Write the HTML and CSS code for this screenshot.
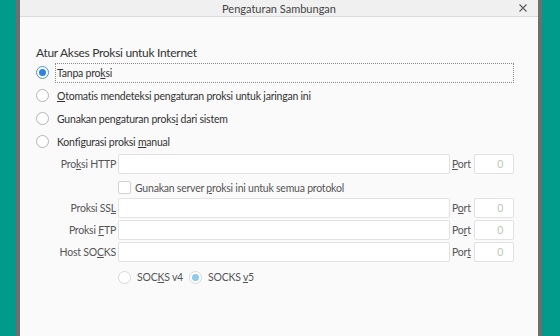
FILE: index.html
```html
<!DOCTYPE html>
<html>
<head>
    <meta charset="utf-8">
    <link rel="stylesheet" href="styles.css">
</head>
<body>
<div class="desk">
    <div class="dialog">
        <div class="titlebar">
            <span class="title">Pengaturan Sambungan</span>
            <svg class="close" width="8" height="8" viewBox="0 0 8 8">
                <path d="M0.5 0.5 L7.5 7.5 M7.5 0.5 L0.5 7.5" stroke="#5a5a5a" stroke-width="1.1" fill="none"/>
            </svg>
        </div>
        <div class="content">
            <h1 class="heading">Atur Akses Proksi untuk Internet</h1>

            <div class="option">
                <span class="radio checked"></span>
                <span class="option_label focused">Tanpa pro<u>k</u>si</span>
            </div>
            <div class="option">
                <span class="radio"></span>
                <span class="option_label"><u>O</u>tomatis mendeteksi pengaturan proksi untuk jaringan ini</span>
            </div>
            <div class="option">
                <span class="radio"></span>
                <span class="option_label">Gunakan pengaturan proks<u>i</u> dari sistem</span>
            </div>
            <div class="option">
                <span class="radio"></span>
                <span class="option_label">Konfigurasi proksi <u>m</u>anual</span>
            </div>

            <div class="manual">
                <span class="field_label">Pro<u>k</u>si HTTP</span>
                <span class="text_box"></span>
                <span class="port_label"><u>P</u>ort</span>
                <span class="port_box">0</span>

                <div class="share_row">
                    <span class="check"></span>
                    <span>Gunakan server <u>p</u>roksi ini untuk semua protokol</span>
                </div>

                <span class="field_label">Proksi SS<u>L</u></span>
                <span class="text_box"></span>
                <span class="port_label">P<u>o</u>rt</span>
                <span class="port_box">0</span>

                <span class="field_label">Proksi <u>F</u>TP</span>
                <span class="text_box"></span>
                <span class="port_label">Po<u>r</u>t</span>
                <span class="port_box">0</span>

                <span class="field_label">Host SO<u>C</u>KS</span>
                <span class="text_box"></span>
                <span class="port_label">Por<u>t</u></span>
                <span class="port_box">0</span>

                <div class="socks_row">
                    <span class="radio faded"></span>
                    <span class="socks_label">SOC<u>K</u>S v4</span>
                    <span class="radio faded dim_checked"></span>
                    <span class="socks_label">SOCKS <u>v</u>5</span>
                </div>
            </div>
        </div>
    </div>
</div>
</body>
</html>
```

FILE: styles.css
```css
html, body {
    margin: 0;
    padding: 0;
}

body {
    font-family: Lato, "Open Sans", sans-serif;
    font-size: 10.5px;
    letter-spacing: -0.22px;
    color: #333333;
}

.desk {
    width: 560px;
    height: 336px;
    background: #009b8b;
    padding-left: 16px;
    box-sizing: border-box;
    overflow: hidden;
}

.dialog {
    width: 518px;
    height: 336px;
    background: #fafafa;
    border-left: 4px solid #6e6e6e;
    border-right: 4px solid #6e6e6e;
}

.titlebar {
    height: 16px;
    background: #f0f0f0;
    border-bottom: 1px solid #dadada;
    display: flex;
    align-items: center;
    justify-content: center;
    position: relative;
}

.title {
    font-size: 11px;
    letter-spacing: 0;
    color: #444444;
}

.close {
    position: absolute;
    right: 11px;
    top: 4px;
}

.content {
    padding: 28px 24px 0 16px;
}

.heading {
    margin: 0;
    font-size: 12px;
    letter-spacing: -0.3px;
    font-weight: normal;
    line-height: 16px;
    color: #333333;
}

.option {
    display: flex;
    align-items: center;
    height: 23px;
}

.option_label {
    flex: 1;
    height: 20px;
    line-height: 18px;
    padding-left: 1px;
    border: 1px dotted transparent;
    box-sizing: border-box;
}

.option_label.focused {
    border-color: #8a8a8a;
}

.radio {
    width: 13px;
    height: 13px;
    border: 1px solid #b4b4b4;
    border-radius: 50%;
    background: #ffffff;
    box-sizing: border-box;
    margin-right: 6px;
    flex: none;
    display: flex;
    align-items: center;
    justify-content: center;
}

.radio.checked {
    border-color: #4a92dc;
}

.radio.checked::after {
    content: "";
    width: 7px;
    height: 7px;
    border-radius: 50%;
    background: #2d83df;
}

.radio.faded {
    border-color: #d8d8d8;
}

.radio.dim_checked::after {
    content: "";
    width: 7px;
    height: 7px;
    border-radius: 50%;
    background: #8ccbe9;
}

.manual {
    display: grid;
    grid-template-columns: 60px 1fr 20px 40px;
    grid-auto-rows: 20px;
    column-gap: 2px;
    row-gap: 2px;
    margin: 1px 0 0 20px;
    color: #555555;
}

.field_label {
    text-align: right;
    line-height: 20px;
    white-space: nowrap;
}

.port_label {
    line-height: 20px;
}

.text_box,
.port_box {
    background: #ffffff;
    border: 1px solid #e2e2e2;
    border-radius: 2px;
    box-sizing: border-box;
}

.port_box {
    text-align: right;
    padding-right: 10px;
    line-height: 18px;
    color: #b9c7b9;
}

.share_row {
    grid-column: 2 / 5;
    display: flex;
    align-items: center;
    gap: 4px;
    height: 21px;
    margin-top: 1px;
}

.check {
    width: 13px;
    height: 13px;
    border: 1px solid #d2d2d2;
    border-radius: 2px;
    background: #ffffff;
    box-sizing: border-box;
}

.socks_row {
    grid-column: 2 / 5;
    display: flex;
    align-items: center;
    height: 26px;
}

.socks_row .radio {
    margin-right: 6px;
}

.socks_label {
    margin-right: 6px;
}
```
